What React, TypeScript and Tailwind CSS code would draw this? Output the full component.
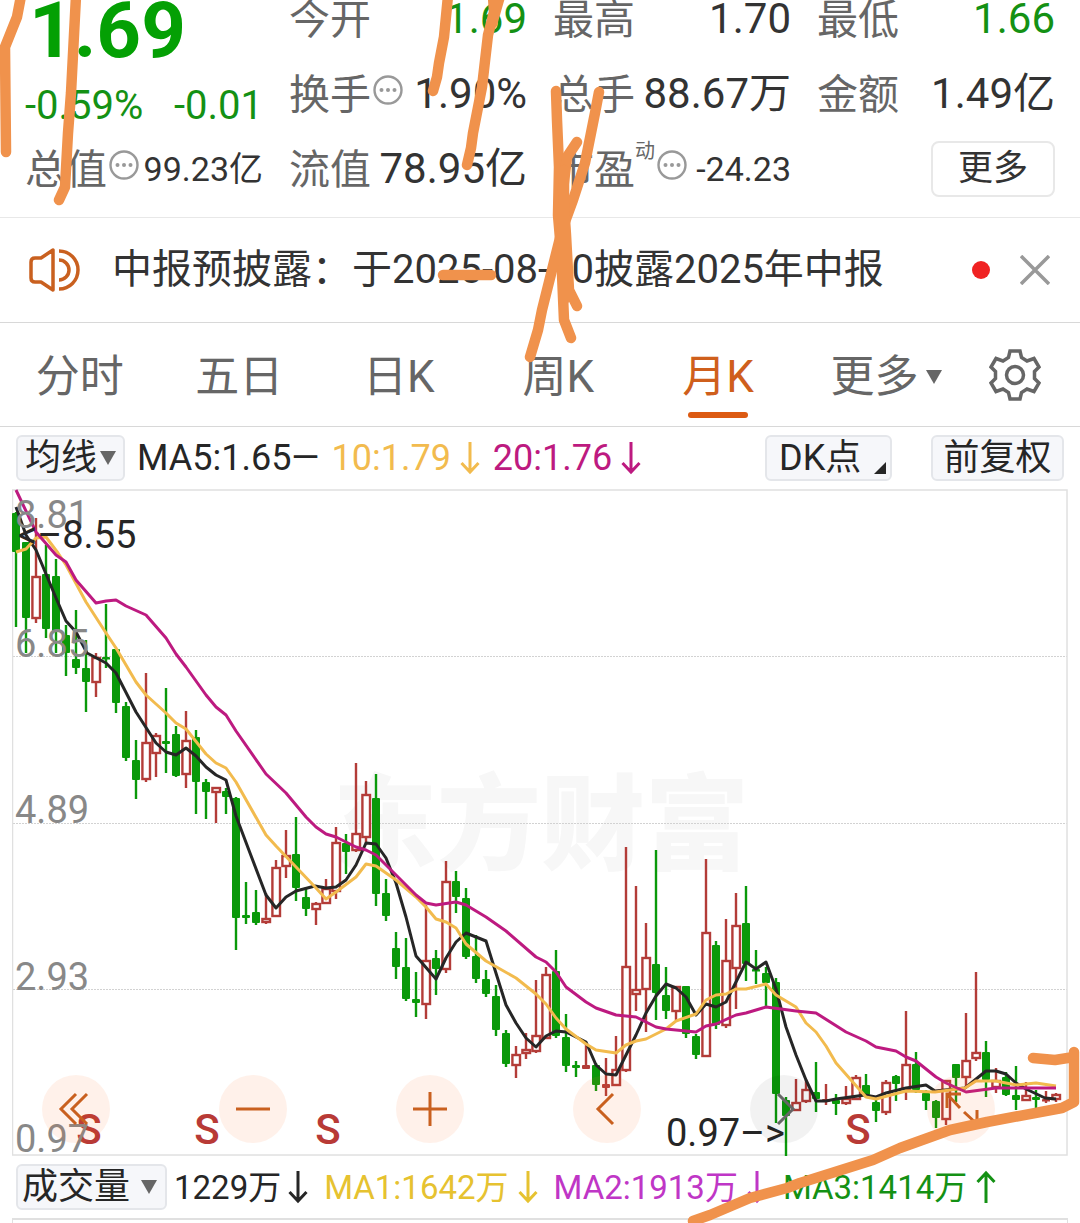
import React from "react";

type Candle = [number, number, number, number, "u" | "d" | "f"];

// [high, body top, body bottom, low, kind]; u = hollow rise, d = fall, f = filled rise
const candles: Candle[] = [
  [512, 513, 552, 627, "d"], [542, 542, 618, 653, "d"], [518, 576, 619, 623, "u"], [545, 574, 629, 638, "d"],
  [559, 576, 631, 653, "d"], [625, 635, 653, 676, "d"], [610, 659, 668, 674, "d"], [640, 668, 682, 712, "d"],
  [653, 657, 683, 697, "u"], [604, 657, 659, 668, "d"], [649, 649, 703, 713, "d"], [702, 706, 758, 761, "d"],
  [740, 760, 780, 799, "d"], [673, 742, 780, 782, "u"], [733, 735, 754, 777, "u"], [688, 741, 744, 773, "d"],
  [726, 734, 776, 777, "d"], [711, 740, 775, 788, "u"], [730, 737, 782, 814, "d"], [779, 782, 792, 819, "d"],
  [787, 787, 793, 823, "u"], [788, 791, 797, 814, "d"], [797, 798, 918, 950, "d"], [882, 915, 918, 924, "d"],
  [890, 912, 923, 925, "d"], [893, 918, 923, 924, "u"], [860, 867, 917, 917, "u"], [830, 855, 867, 878, "u"],
  [817, 854, 888, 901, "d"], [887, 897, 909, 916, "d"], [902, 903, 910, 925, "u"], [879, 888, 904, 904, "u"],
  [827, 842, 892, 899, "u"], [834, 843, 852, 874, "d"], [763, 833, 851, 852, "u"], [781, 794, 838, 843, "u"],
  [774, 798, 894, 906, "d"], [879, 893, 916, 921, "d"], [932, 948, 967, 979, "d"], [938, 967, 999, 1001, "d"],
  [972, 999, 1003, 1017, "d"], [905, 960, 1005, 1019, "u"], [950, 958, 969, 995, "d"], [861, 881, 970, 973, "u"],
  [871, 881, 897, 913, "d"], [888, 898, 957, 959, "d"], [935, 956, 979, 983, "d"], [970, 979, 994, 997, "d"],
  [985, 996, 1030, 1036, "d"], [1030, 1033, 1064, 1067, "d"], [1046, 1054, 1066, 1078, "u"], [1033, 1049, 1054, 1059, "u"],
  [980, 1035, 1052, 1053, "u"], [967, 974, 1039, 1039, "u"], [950, 971, 1036, 1038, "d"], [1014, 1037, 1066, 1072, "d"],
  [1061, 1065, 1068, 1077, "d"], [1043, 1065, 1069, 1069, "f"], [1063, 1065, 1085, 1091, "d"], [1058, 1084, 1088, 1096, "f"],
  [1036, 1069, 1086, 1086, "u"], [847, 966, 1071, 1072, "u"], [886, 989, 995, 1011, "u"], [923, 957, 990, 1032, "u"],
  [850, 964, 993, 1020, "d"], [967, 995, 1011, 1019, "d"], [986, 986, 1012, 1020, "u"], [986, 986, 1034, 1038, "d"],
  [1034, 1036, 1055, 1059, "d"], [859, 932, 1057, 1057, "u"], [941, 945, 1025, 1029, "d"], [919, 960, 1026, 1028, "u"],
  [893, 925, 969, 1009, "u"], [886, 923, 964, 981, "d"], [950, 969, 971, 984, "d"], [967, 973, 983, 1007, "d"],
  [978, 982, 1094, 1123, "d"], [1097, 1100, 1116, 1156, "d"], [1079, 1102, 1111, 1111, "u"], [1080, 1089, 1102, 1103, "u"],
  [1062, 1092, 1099, 1112, "d"], [1084, 1099, 1101, 1105, "f"], [1094, 1100, 1104, 1115, "d"], [1086, 1098, 1104, 1105, "u"],
  [1075, 1077, 1100, 1100, "u"], [1074, 1085, 1095, 1098, "d"], [1100, 1102, 1111, 1122, "d"], [1080, 1082, 1113, 1115, "u"],
  [1075, 1076, 1084, 1101, "d"], [1011, 1064, 1090, 1100, "u"], [1052, 1064, 1090, 1093, "d"], [1090, 1093, 1101, 1110, "d"],
  [1100, 1101, 1118, 1128, "d"], [1080, 1080, 1120, 1125, "u"], [1064, 1064, 1078, 1102, "d"], [1013, 1060, 1078, 1087, "u"],
  [972, 1052, 1059, 1061, "u"], [1041, 1052, 1080, 1097, "d"], [1068, 1080, 1088, 1093, "u"], [1072, 1077, 1095, 1096, "d"],
  [1066, 1095, 1100, 1110, "d"], [1082, 1095, 1101, 1101, "u"], [1090, 1097, 1100, 1109, "d"], [1091, 1099, 1101, 1103, "f"],
  [1093, 1094, 1100, 1102, "u"],
];

const ma5 =
  "16,507 26,535 36,550 56,598 66,621 76,632 87,653 106,663 116,673 136,712 156,743 166,752 176,755 186,748 196,756 206,767 216,775 226,780 236,816 250,853 266,895 276,908 286,897 296,891 315,886 326,888 336,887 346,880 356,865 366,843 376,844 386,858 396,883 406,917 416,956 436,979 446,958 456,942 466,933 486,941 495,970 506,1005 516,1023 526,1038 536,1047 546,1036 556,1031 566,1032 586,1042 596,1065 606,1074 616,1075 636,1035 646,1013 656,996 666,984 676,988 686,997 696,1015 706,1004 716,1007 726,1002 746,962 756,969 766,962 776,989 786,1027 796,1055 806,1080 816,1101 826,1101 836,1099 865,1095 876,1097 886,1093 906,1088 926,1085 935,1091 965,1088 986,1071 996,1071 1006,1074 1016,1083 1026,1089 1045,1098 1056,1099";
const ma10 =
  "16,552 26,549 36,538 46,537 58,553 66,565 86,602 106,633 116,648 136,682 146,695 166,713 176,723 186,729 206,754 216,763 226,768 236,782 266,835 276,846 296,867 316,888 326,899 336,892 356,877 366,864 376,866 396,880 416,897 426,907 436,919 446,922 456,928 466,944 486,961 516,978 536,994 546,1004 556,1018 566,1029 586,1044 596,1050 616,1053 626,1045 636,1041 646,1039 666,1029 676,1021 696,1014 706,1000 716,995 726,994 736,989 746,989 766,984 776,995 796,1007 806,1023 816,1032 826,1046 836,1063 866,1097 876,1099 906,1091 935,1092 965,1088 976,1081 996,1081 1016,1085 1036,1083 1056,1086";
const ma20 =
  "16,490 36,532 56,555 66,562 76,580 96,603 106,601 116,600 126,606 146,615 166,638 176,654 186,667 206,695 216,707 226,715 236,731 266,774 286,793 306,817 316,827 326,834 336,837 356,847 366,850 376,855 396,875 416,895 426,903 436,905 456,902 466,905 486,917 506,931 536,957 546,962 556,972 566,987 586,1002 596,1008 616,1015 636,1017 656,1027 666,1029 696,1032 706,1026 716,1024 736,1015 746,1013 766,1007 796,1011 816,1013 846,1032 866,1041 876,1047 896,1051 906,1057 916,1061 936,1077 946,1083 966,1092 996,1088 1056,1088";

function Info() {
  return (
    <svg viewBox="0 0 30 30" className="ml-[2px] size-[30px] shrink-0 -translate-y-1" aria-hidden="true">
      <circle cx="15" cy="15" r="13.500" fill="none" stroke="#999" strokeWidth="2.400" />
      <circle cx="8.500" cy="15" r="2" fill="#999" />
      <circle cx="15" cy="15" r="2" fill="#999" />
      <circle cx="21.500" cy="15" r="2" fill="#999" />
    </svg>
  );
}

function Stat(props: { label: string; value: string; info?: boolean; sup?: string; small?: boolean; green?: boolean }) {
  return (
    <div className="flex h-[75px] items-center">
      <span className="pt-1 text-[41px] text-[#666]">{props.label}</span>
      {props.sup && <sup className="top-0 mb-9 text-[20px] text-[#666]">{props.sup}</sup>}
      {props.info && <Info />}
      <span
        className={`ml-auto ${props.small ? "text-[34px]" : "text-[42px]"} ${props.green ? "text-[#149114]" : "text-[#333]"}`}
      >
        {props.value}
      </span>
    </div>
  );
}

function Arrow({ up = false }: { up?: boolean }) {
  return (
    <svg viewBox="0 0 22 34" className="h-[34px] w-[22px] shrink-0" fill="none" stroke="currentColor" strokeWidth="3" role="img" aria-label={up ? "↑" : "↓"}>
      <path d={up ? "M11 33V3M2.500 12L11 3l8.500 9" : "M11 1v30M2.500 22L11 31l8.500-9"} />
    </svg>
  );
}

function Caret() {
  return (
    <svg viewBox="0 0 16 14" className="h-[14px] w-4 shrink-0" aria-hidden="true">
      <path d="M0 0h16L8 14z" fill="#666" />
    </svg>
  );
}

function RoundButton({ label, path, gray = false }: { label: string; path: string; gray?: boolean }) {
  return (
    <button
      type="button"
      aria-label={label}
      className={`size-[68px] rounded-full ${gray ? "bg-[#0000000d] text-[#666]" : "bg-[#fa6e1e18] text-[#c9601f]"}`}
    >
      <svg viewBox="0 0 68 68" className="size-full" fill="none" stroke="currentColor" strokeWidth="3">
        <path d={path} />
      </svg>
    </button>
  );
}

function KChart() {
  return (
    <div className="relative mx-3">
      <svg viewBox="12 489 1056 667" className="block w-full" role="img" aria-label="月K线图">
        <g fontFamily='"Noto Sans CJK SC", sans-serif' fontWeight="900" fontSize="104" fill="#f7f7f7">
          <text x="333" y="862">东方财富</text>
        </g>
        <g stroke="#d2d2d2" strokeWidth="1" strokeDasharray="2 1">
          <path d="M13 656.500H1067M13 823.500H1067M13 989.500H1067" />
        </g>
        <rect x="12.500" y="490" width="1054.500" height="665" fill="none" stroke="#e0e0e0" strokeWidth="1.500" />
        {candles.map(([high, top, bottom, low, kind], i) => {
          const x = 16 + i * 10;
          const color = kind === "d" ? "#0a990a" : "#b33c38";
          return (
            <g key={i} stroke={color} strokeWidth="2.400">
              {kind === "u" ? (
                <>
                  <path d={`M${x} ${high}V${top}M${x} ${bottom}V${low}`} />
                  <rect x={x - 3.6} y={top + 1} width="7.600" height={Math.max(bottom - top - 2, 2)} fill="#fff" />
                </>
              ) : (
                <>
                  <path d={`M${x} ${high}V${low}`} />
                  <rect x={x - 3.5} y={top} width="7" height={Math.max(bottom - top, 2)} fill={color} stroke="none" />
                  <rect x={x - 3.5} y={top + 1} width="7" height={Math.max(bottom - top - 2, 1)} fill={color} strokeWidth="1" />
                </>
              )}
            </g>
          );
        })}
        <g fill="none" strokeWidth="3" strokeLinejoin="round">
          <polyline points={ma5} stroke="#262626" />
          <polyline points={ma10} stroke="#f2bb4e" />
          <polyline points={ma20} stroke="#bd1a80" />
        </g>
        <g fontFamily='Roboto, sans-serif' fontWeight="500" fontSize="42" fill="#b83a36" textAnchor="middle">
          <text x="89" y="1144">S</text>
          <text x="207" y="1144">S</text>
          <text x="328" y="1144">S</text>
          <text x="858" y="1144">S</text>
        </g>
        <g fontFamily='Roboto, sans-serif' fontSize="38" fill="#888">
          <text x="15" y="528">8.81</text>
          <text x="15" y="657">6.85</text>
          <text x="15" y="823">4.89</text>
          <text x="15" y="990">2.93</text>
          <text x="15" y="1152">0.97</text>
        </g>
        <g fontFamily='Roboto, sans-serif' fontSize="38" fill="#262626">
          <text x="18" y="548">&lt;–8.55</text>
          <text x="666" y="1146">0.97–&gt;</text>
        </g>
      </svg>
      <div className="absolute inset-x-0 bottom-[13px] flex justify-between pr-[73px] pl-[30px]">
        <RoundButton label="最早" path="M34 19L19 34l15 15M45 19L30 34l15 15" />
        <RoundButton label="缩小" path="M17 34h34" />
        <RoundButton label="放大" path="M17 34h34M34 17v34" />
        <RoundButton label="向左" path="M40 19L25 34l15 15" />
        <RoundButton label="向右" path="M28 19l15 15-15 15" gray />
        <RoundButton label="全屏" path="M20 33V19h14M20 19l13 14M50 35v14H36M50 49L37 37" />
      </div>
    </div>
  );
}

const chip = "flex h-[46px] items-center rounded-md border-2 border-[#e4e6ea] bg-[#f6f7fa] text-[36px] text-[#262626]";

export default function App() {
  return (
    <main className="relative overflow-hidden bg-white font-['Roboto','Noto_Sans_CJK_SC',sans-serif] leading-none whitespace-nowrap">
      <section className="border-b border-[#e8e8e8] px-[25px] pb-[11px]">
        <div className="-mt-[19px] grid grid-cols-4 gap-x-[26px]">
          <div className="row-span-3">
            <div className="flex h-[100px] items-center pl-1 text-[78px] font-bold text-[#04a004]">1.69</div>
            <div className="flex h-[50px] items-center justify-between text-[40px] text-[#149114]">
              <span>-0.59%</span>
              <span>-0.01</span>
            </div>
            <Stat label="总值" value="99.23亿" info small />
          </div>
          <Stat label="今开" value="1.69" green />
          <Stat label="最高" value="1.70" />
          <Stat label="最低" value="1.66" green />
          <Stat label="换手" value="1.90%" info />
          <Stat label="总手" value="88.67万" />
          <Stat label="金额" value="1.49亿" />
          <Stat label="流值" value="78.95亿" />
          <Stat label="市盈" sup="动" value="-24.23" info small />
          <div className="flex h-[75px] items-center justify-end">
            <button type="button" className="h-[56px] w-[124px] rounded-lg border-2 border-[#e8e8e8] text-[35px] text-[#333]">
              更多
            </button>
          </div>
        </div>
      </section>

      <section className="flex h-[105px] items-center border-b border-[#d8d8d8] pr-[30px] pl-[29px]">
        <svg viewBox="0 0 52 44" className="h-11 w-[52px] shrink-0" fill="none" stroke="#c9601f" strokeWidth="3.500" aria-hidden="true">
          <path d="M24 2v40L12 34H6q-4 0-4-4V14q0-4 4-4h6z" strokeLinejoin="round" />
          <path d="M30 12a10 10 0 0 1 0 20M30 3a19 19 0 0 1 0 38" />
        </svg>
        <p className="ml-[31px] text-[40px] text-[#333]">中报预披露：于2025-08-10披露2025年中报</p>
        <span className="ml-auto size-[18px] rounded-full bg-[#f02222]" />
        <button type="button" aria-label="关闭" className="ml-[30px]">
          <svg viewBox="0 0 30 30" className="size-[30px]" stroke="#999" strokeWidth="3.500">
            <path d="M1 1l28 28M29 1L1 29" />
          </svg>
        </button>
      </section>

      <nav className="grid h-[104px] grid-cols-[repeat(5,160fr)_178fr_80fr] border-b border-[#d8d8d8] pr-[25px] text-[44px] text-[#666]">
        <button type="button" className="pt-1">分时</button>
        <button type="button" className="pt-1">五日</button>
        <button type="button" className="pt-1">日K</button>
        <button type="button" className="pt-1">周K</button>
        <button type="button" aria-current="true" className="relative pt-1 text-[#cf5f1c]">
          月K
          <span className="absolute bottom-2 left-1/2 h-[6px] w-[60px] -translate-x-1/2 rounded-full bg-[#dc5a12]" />
        </button>
        <button type="button" className="flex items-center justify-center gap-2 pt-1">
          更多
          <Caret />
        </button>
        <button type="button" aria-label="设置" className="flex items-center justify-center">
          <svg viewBox="0 0 52 52" className="size-[52px]" fill="none" stroke="#666" strokeWidth="3.500">
            <path d="M21 2h10l1.500 6.500 5.500 3.500 7-2.500 5 8.500-4.500 4.500v7l4.500 4.500-5 8.500-7-2.500-5.500 3.500L31 50H21l-1.500-6.500L14 40l-7 2.500L2 34l4.500-4.500v-7L2 18l5-8.500 7 2.500 5.500-3.500z" />
            <circle cx="26" cy="26" r="8.500" />
          </svg>
        </button>
      </nav>

      <div className="flex h-[62px] items-center pr-4 pl-4 text-[36px]">
        <button type="button" className={`${chip} w-[109px] justify-center gap-[3px]`}>
          均线
          <Caret />
        </button>
        <span className="ml-3 text-[#262626]">MA5:1.65—</span>
        <span className="ml-3 flex items-center gap-2 text-[#f2bb4e]">
          10:1.79
          <Arrow />
        </span>
        <span className="ml-3 flex items-center gap-2 text-[#bd1a80]">
          20:1.76
          <Arrow />
        </span>
        <button type="button" className={`${chip} ml-auto w-[127px] justify-between pr-1 pl-3`}>
          DK点
          <svg viewBox="0 0 12 12" className="mt-5 size-3">
            <path d="M12 0v12H0z" fill="#262626" />
          </svg>
        </button>
        <button type="button" className={`${chip} ml-[39px] w-[133px] justify-center`}>
          前复权
        </button>
      </div>

      <KChart />

      <div className="flex h-[62px] items-center pl-4 text-[33px]">
        <button type="button" className={`${chip} w-[151px] justify-between pr-2 pl-1`}>
          成交量
          <Caret />
        </button>
        <span className="ml-[7px] flex items-center gap-[6px] text-[#262626]">
          1229万
          <Arrow />
        </span>
        <span className="ml-[15px] flex items-center gap-2 text-[#e6c230]">
          MA1:1642万
          <Arrow />
        </span>
        <span className="ml-[15px] flex items-center gap-2 text-[#bf36c6]">
          MA2:1913万
          <Arrow />
        </span>
        <span className="ml-[15px] flex items-center gap-2 text-[#149114]">
          MA3:1414万
          <Arrow up />
        </span>
      </div>
      <div className="mx-3 h-[5px] border-x border-t-2 border-[#e0e0e0]" />

      <svg
        viewBox="0 0 1080 1223"
        className="pointer-events-none absolute top-0 left-0 w-full"
        fill="none"
        stroke="#f0924c"
        strokeWidth="10.500"
        strokeLinecap="round"
        strokeLinejoin="round"
        aria-hidden="true"
      >
        <path d="M21-4L17 17 5 47 6 152" />
        <path d="M76-4L71 93 68 133 65 187 59 200" />
        <path d="M448-4L444 37 439 63 437 77 433 91" />
        <path d="M493-4L494 12 488 35 482 87 473 133 471 148 467 165M500-4L492 24" />
        <path d="M556 91L557 120 559 167 558 215 561 250 564 320 571 338" />
        <path d="M599 92L595 113 585 163 573 200 562 230 552 270 542 310 538 330 530 357" />
        <path d="M577 142L567 157 563 190 566 235 569 290 577 306" />
        <path d="M564 170L564 300" />
        <path d="M443 275H491" />
        <path d="M1033 1058L1055 1060 1074 1057M1074 1052V1102L1062 1108 987 1122 950 1130 900 1148 873 1160 800 1183 787 1188 750 1198 710 1215 693 1221" />
      </svg>
    </main>
  );
}
